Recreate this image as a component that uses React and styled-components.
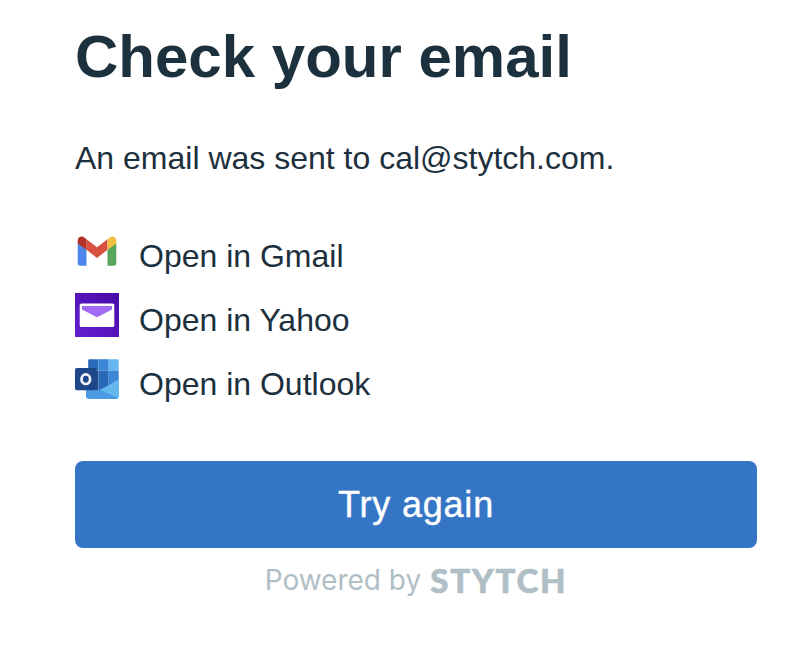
import React from "react";
import styled, { createGlobalStyle } from "styled-components";

const GlobalStyle = createGlobalStyle`
  body {
    margin: 0;
    background: #ffffff;
    color: #1d303d;
    font-family: "Liberation Sans", Arial, Helvetica, sans-serif;
  }
`;

const Panel = styled.main`
  box-sizing: border-box;
  width: 798px;
  height: 654px;
  padding: 21px 41px 0 75px;
  display: flex;
  flex-direction: column;
  background: #ffffff;
`;

const Title = styled.h1`
  margin: 0;
  font-size: 60px;
  line-height: 72px;
  font-weight: 700;
  white-space: nowrap;
`;

const Message = styled.p`
  margin: 45px 0 0;
  font-size: 32px;
  line-height: 40px;
  white-space: nowrap;
`;

const MailList = styled.ul`
  list-style: none;
  margin: 51px 0 0;
  padding: 0;
  display: flex;
  flex-direction: column;
  gap: 20px;
`;

const MailRow = styled.li`
  display: flex;
  gap: 20px;
  height: 44px;
`;

const MailIcon = styled.svg`
  display: block;
  width: 44px;
  height: 44px;
  flex: none;
`;

const MailLabel = styled.a`
  padding-top: 7px;
  font-size: 32px;
  line-height: 40px;
  white-space: nowrap;
`;

const RetryButton = styled.button`
  margin: 60px 0 0;
  padding: 0;
  height: 87px;
  border: 0;
  border-radius: 8px;
  background: #3476c5;
  color: #ffffff;
  font-family: inherit;
  font-size: 36px;
  line-height: 87px;
  letter-spacing: 0.8px;
  -webkit-text-stroke: 0.4px #ffffff;
`;

const Footer = styled.footer`
  margin-top: 12px;
  height: 42px;
  display: flex;
  justify-content: center;
  align-items: flex-start;
  gap: 9px;
  color: #b0bec5;
  white-space: nowrap;
`;

const PoweredBy = styled.span`
  font: 400 28px/40px Inter, sans-serif;
`;

const Wordmark = styled.span`
  font: 900 33px/40px Lato, sans-serif;
  letter-spacing: 1.8px;
  -webkit-text-stroke: 0.6px #b0bec5;
`;

const GmailIcon = () => (
  <MailIcon viewBox="0 0 44 44" aria-hidden="true">
    <path d="M2.7 14 11.5 20.5V36.7H5.5Q2.7 36.7 2.7 34Z" fill="#4f86ec" />
    <path d="M32.5 20.5 41.3 14V34Q41.3 36.7 38.5 36.7H32.5Z" fill="#58a55c" />
    <path d="M11.5 10.3 22 18.2 32.5 10.3V20.8L22 29 11.5 20.8Z" fill="#d85140" />
    <path d="M2.7 11.7C2.7 7.8 6.7 6.3 9.6 8.7L11.5 10.2V21L2.7 14.4Z" fill="#b33225" />
    <path d="M32.5 10.2 34.4 8.7C37.3 6.3 41.3 7.8 41.3 11.7V14.4L32.5 21Z" fill="#f1bf42" />
  </MailIcon>
);

const YahooIcon = () => (
  <MailIcon viewBox="0 0 44 44" aria-hidden="true">
    <defs>
      <linearGradient id="yahoo-bg" x1="0" y1="1" x2="1" y2="0">
        <stop offset="0" stopColor="#6420d2" />
        <stop offset="1" stopColor="#4609a5" />
      </linearGradient>
    </defs>
    <path d="M0 0H44V44H0Z" fill="url(#yahoo-bg)" />
    <rect x="4.7" y="10.5" width="34.6" height="23.5" rx="1.6" fill="#fff" />
    <path d="M7 13H37V16.6L22 24.2 7 16.6Z" fill="#a16af3" />
  </MailIcon>
);

const OutlookIcon = () => (
  <MailIcon viewBox="0 0 44 44" aria-hidden="true">
    <path d="M13.2 3.5Q13.2 2.2 14.5 2.2H23.4V13.5H13.2Z" fill="#2a6abb" />
    <path d="M23.4 2.2H33.7V13.5H23.4Z" fill="#3c87d5" />
    <path d="M33.7 2.2H42.5Q43.7 2.2 43.7 3.5V13.5H33.7Z" fill="#66b8f2" />
    <path d="M13.2 13.5H23.4V36H13.2Z" fill="#214d89" />
    <path d="M23.4 13.5H33.7V30L25 34 23.4 33Z" fill="#2a69b8" />
    <path d="M33.7 13.5H43.7V23L33.7 29Z" fill="#3c87d5" />
    <path d="M44 22.5V38.5Q44 42 40.5 42H14L25 32.8Z" fill="#65b8ee" />
    <path d="M11 33H25.6L43 41Q42.2 42 40.5 42H14Q11 42 11 39Z" fill="#499ce3" />
    <rect x="0" y="11" width="21.7" height="22.2" rx="1.8" fill="#1d4789" />
    <ellipse cx="10.8" cy="22.2" rx="4.3" ry="4.8" fill="none" stroke="#f1f4fa" strokeWidth="2.7" />
  </MailIcon>
);

const mailClients = [
  { name: "Gmail", Icon: GmailIcon },
  { name: "Yahoo", Icon: YahooIcon },
  { name: "Outlook", Icon: OutlookIcon },
];

export default function App() {
  return (
    <>
      <GlobalStyle />
      <Panel>
        <Title>Check your email</Title>
        <Message>An email was sent to cal@stytch.com.</Message>
        <MailList>
          {mailClients.map(({ name, Icon }) => (
            <MailRow key={name}>
              <Icon />
              <MailLabel>Open in {name}</MailLabel>
            </MailRow>
          ))}
        </MailList>
        <RetryButton type="button">Try again</RetryButton>
        <Footer>
          <PoweredBy>Powered by</PoweredBy>
          <Wordmark>STYTCH</Wordmark>
        </Footer>
      </Panel>
    </>
  );
}
